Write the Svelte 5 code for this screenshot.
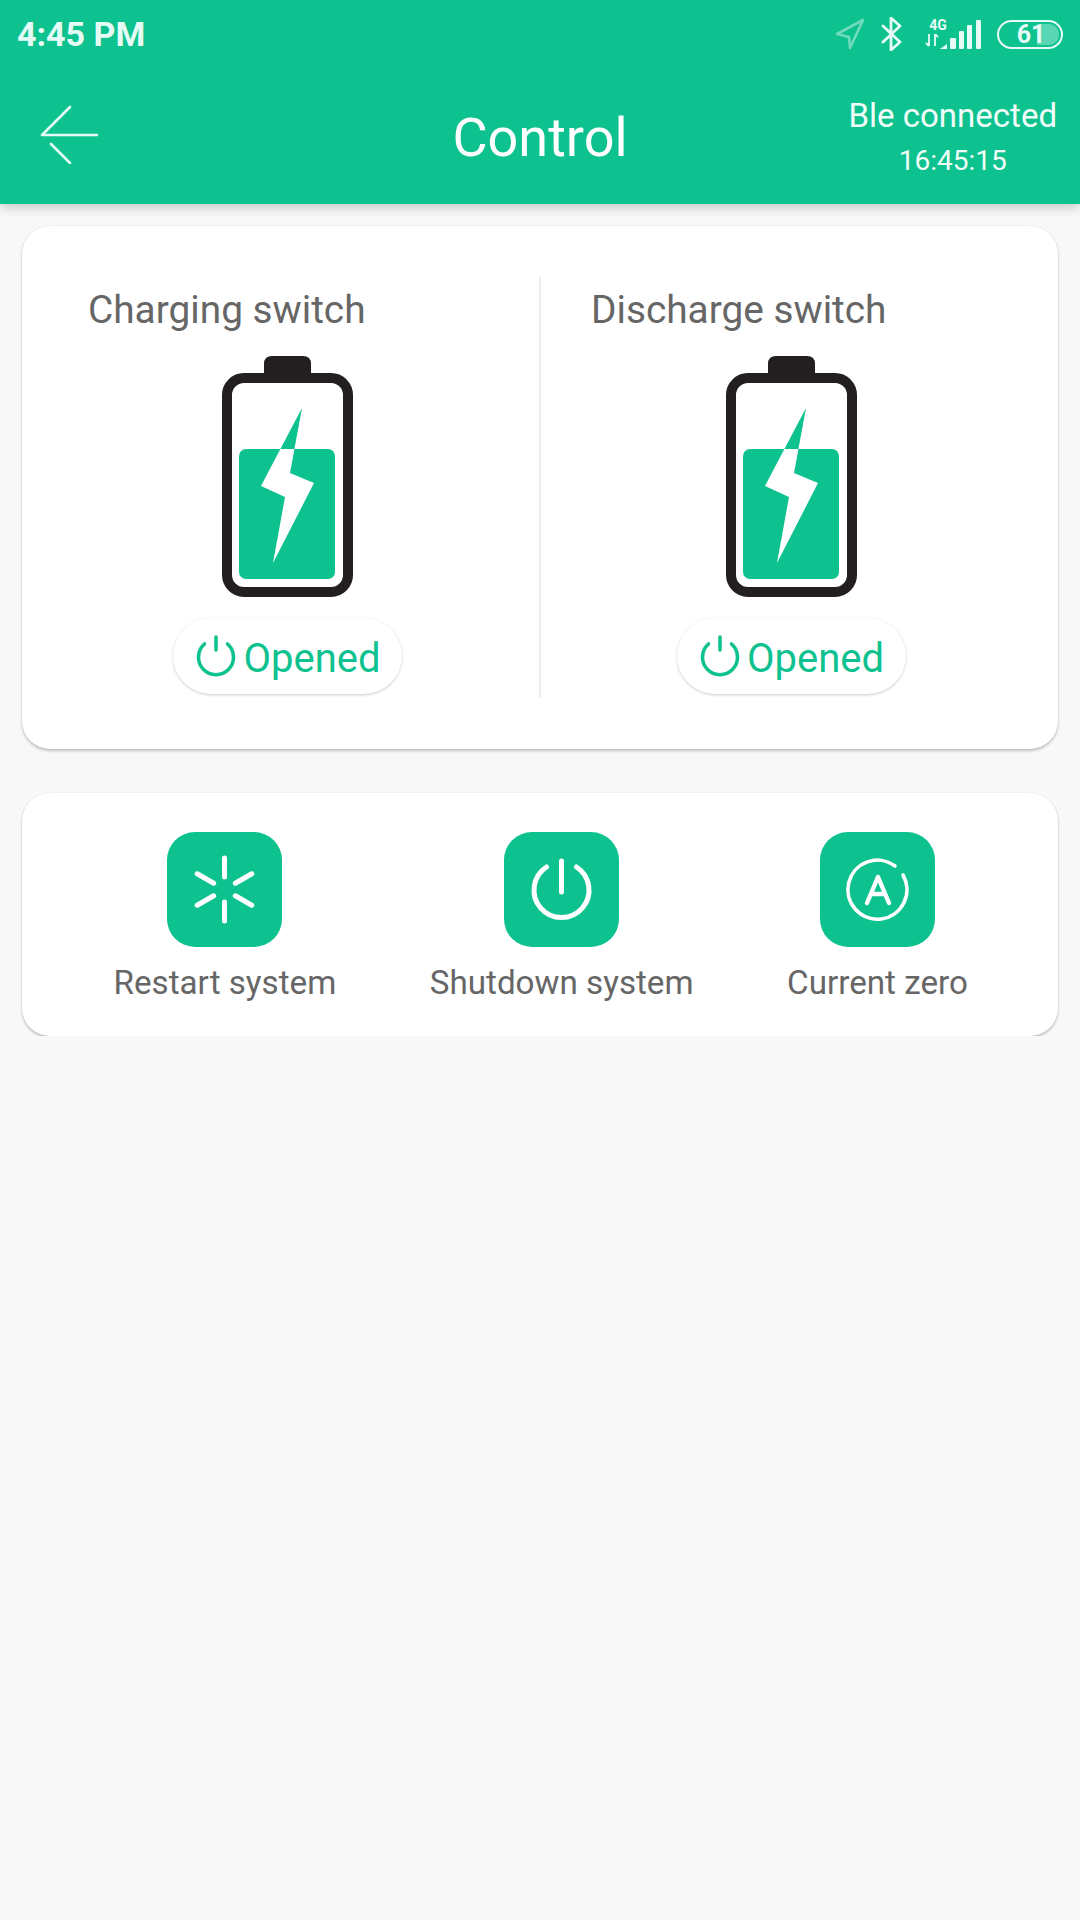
<script>
  const switches = [
    { title: 'Charging switch', state: 'Opened' },
    { title: 'Discharge switch', state: 'Opened' }
  ]
  const actions = [
    { key: 'restart', label: 'Restart system' },
    { key: 'shutdown', label: 'Shutdown system' },
    { key: 'zero', label: 'Current zero' }
  ]
  const spokes = [0, 60, 120, 180, 240, 300]
</script>

<header>
  <div class="status">
    <span class="clock">4:45 PM</span>
    <div class="status-icons">
      <svg class="i-nav" width="30" height="32" viewBox="0 0 30 32">
        <path d="M28 2 L2 16 L14 19 L15 30 Z" fill="none" stroke="#e6fbf5" stroke-opacity=".45" stroke-width="2.6" stroke-linejoin="round" />
      </svg>
      <svg class="i-bt" width="22" height="34" viewBox="0 0 22 34">
        <path d="M2 9 L19 25 L10 33 L10 1 L19 9 L2 25" fill="none" stroke="#e6fbf5" stroke-width="2.8" stroke-linejoin="round" stroke-linecap="round" />
      </svg>
      <div class="net">
        <span class="net-label">4G</span>
        <svg width="14" height="13" viewBox="0 0 14 13">
          <path d="M4 0 V12 M1 9 L4 12 M10 12 V0 M10 0 L13 3" fill="none" stroke="#e6fbf5" stroke-width="1.8" />
        </svg>
      </div>
      <svg class="i-signal" width="41" height="30" viewBox="0 0 41 30">
        <path d="M0 29 L7 24 V29 Z" fill="#e6fbf5" />
        <rect x="10" y="18" width="6" height="11" rx="1" fill="#e6fbf5" />
        <rect x="19" y="11" width="5" height="18" rx="1" fill="#e6fbf5" />
        <rect x="27" y="5" width="5" height="24" rx="1" fill="#e6fbf5" />
        <rect x="36" y="0" width="5" height="29" rx="1" fill="#e6fbf5" />
      </svg>
      <div class="level">
        <span class="level-fill"></span>
        <span class="level-num">61</span>
      </div>
    </div>
  </div>
  <div class="toolbar">
    <div class="back">
      <svg width="60" height="60" viewBox="0 0 60 60">
        <path d="M30 3 L2 31 H57 M11 40 L30 59" fill="none" stroke="#e6fbf5" stroke-width="2.6" stroke-linecap="round" stroke-linejoin="round" />
      </svg>
    </div>
    <h1>Control</h1>
    <div class="conn">
      <span class="conn-state">Ble connected</span>
      <span class="conn-time">16:45:15</span>
    </div>
  </div>
</header>

<main>
  <section class="card switches">
    {#each switches as sw}
      <div class="switch">
        <div class="switch-title">{sw.title}</div>
        <svg class="battery" width="131" height="241" viewBox="0 0 131 241">
          <path d="M42 18 V8 Q42 0 50 0 H81 Q89 0 89 8 V18 Z" fill="#231f20" />
          <rect x="5" y="22" width="121" height="214" rx="17" fill="#fff" stroke="#231f20" stroke-width="10" />
          <polygon points="80,52 58.4,93 72.4,93" fill="#0ec28f" />
          <rect x="17" y="93" width="96" height="130" rx="7" fill="#0ec28f" />
          <polygon points="58.4,93 39,130 63,141 51,207 92,127 68,117 72.4,93" fill="#fff" />
        </svg>
        <div class="pill">
          <svg width="40" height="42" viewBox="0 0 40 42">
            <path d="M8.5 9 A17.5 17.5 0 1 0 31.5 9 M20 2 V15" fill="none" stroke="#0ec28f" stroke-width="3.6" stroke-linecap="round" />
          </svg>
          <span class="pill-text">{sw.state}</span>
        </div>
      </div>
    {/each}
  </section>

  <section class="card actions">
    {#each actions as action}
      <div class="action">
        <div class="tile">
          <svg width="115" height="115" viewBox="0 0 115 115">
            <g fill="none" stroke="#fff" stroke-linecap="round">
              {#if action.key === 'restart'}
                {#each spokes as a}
                  <path d="M57.5 26 V45" stroke-width="5" transform="rotate({a} 57.5 57.5)" />
                {/each}
              {:else if action.key === 'shutdown'}
                <path d="M42.5 35 A27.5 27.5 0 1 0 72.5 35 M57.5 29 V60" stroke-width="5" />
              {:else}
                <path d="M83 43 A29.5 29.5 0 1 1 75 34" stroke-width="3.6" />
                <path d="M47 71 L58 45 L69 71 M51 62 H65" stroke-width="4.4" stroke-linejoin="round" />
              {/if}
            </g>
          </svg>
        </div>
        <span class="action-label">{action.label}</span>
      </div>
    {/each}
  </section>
</main>

<style>
  :global(body) {
    background: #f8f8f8;
    font-family: Roboto, "Liberation Sans", sans-serif;
  }

  header {
    background: #0ec28f;
    height: 204px;
    box-shadow: 0 4px 10px rgba(0, 0, 0, .18);
    color: #fff;
  }

  .status {
    height: 68px;
    display: flex;
    align-items: center;
    justify-content: space-between;
    padding: 0 17px;
  }
  .clock {
    font-size: 34px;
    font-weight: 700;
    color: #e6fbf5;
  }
  .status-icons {
    display: flex;
    align-items: center;
    gap: 14px;
  }
  .i-nav {
    margin-right: 2px;
  }
  .net {
    display: flex;
    flex-direction: column;
    align-items: center;
    gap: 3px;
    margin-left: 8px;
    margin-right: -25px;
    margin-top: -2px;
    width: 26px;
  }
  .net svg {
    margin-left: -12px;
  }
  .net-label {
    font-size: 14px;
    line-height: 12px;
    font-weight: 700;
    color: #e6fbf5;
  }
  .i-signal {
    margin-top: 2px;
    margin-right: 2px;
  }
  .level {
    position: relative;
    width: 66px;
    height: 29px;
    box-sizing: border-box;
    border: 2.6px solid #e6fbf5;
    border-radius: 15px;
    display: flex;
    align-items: center;
    justify-content: center;
  }
  .level-fill {
    position: absolute;
    right: 2px;
    top: 2px;
    bottom: 2px;
    width: 22px;
    border-radius: 0 10px 10px 0;
    background: rgba(230, 251, 245, .35);
  }
  .level-num {
    position: relative;
    font-size: 25px;
    font-weight: 700;
    color: #e6fbf5;
    margin-right: -2px;
  }

  .toolbar {
    height: 136px;
    display: grid;
    grid-template-columns: 1fr auto 1fr;
    align-items: center;
    padding: 0 23px;
  }
  .back {
    display: flex;
    margin-left: 17px;
    margin-bottom: 4px;
  }
  h1 {
    margin: 2px 0 0;
    font-size: 54px;
    font-weight: 400;
    color: #fff;
  }
  .conn {
    justify-self: end;
    display: flex;
    flex-direction: column;
    align-items: center;
    gap: 9px;
    color: #f0fdf9;
  }
  .conn-state {
    font-size: 33px;
  }
  .conn-time {
    font-size: 28px;
  }

  main {
    padding: 22px 22px 0;
    display: flex;
    flex-direction: column;
    gap: 44px;
  }
  .card {
    background: #fff;
    border-radius: 28px;
    box-shadow: 0 2px 3px rgba(0, 0, 0, .22), 0 0 2px rgba(0, 0, 0, .08);
  }

  .switches {
    height: 523px;
    box-sizing: border-box;
    padding: 50px 17px 51px 14px;
    display: grid;
    grid-template-columns: 503px 1fr;
  }
  .switch {
    display: flex;
    flex-direction: column;
    align-items: center;
  }
  .switch + .switch {
    border-left: 2px solid #eeeeee;
  }
  .switch-title {
    align-self: flex-start;
    padding-left: 52px;
    margin-top: 12px;
    font-size: 38.8px;
    line-height: 44px;
    color: #666;
  }
  .switch + .switch .switch-title {
    padding-left: 50px;
  }
  .battery {
    margin-top: 24px;
  }
  .pill {
    margin-top: 21px;
    width: 229px;
    height: 76px;
    box-sizing: border-box;
    padding-left: 2px;
    border-radius: 38px;
    background: #fff;
    box-shadow: 0 1px 3px rgba(0, 0, 0, .2);
    display: flex;
    align-items: center;
    justify-content: center;
    gap: 7px;
    font-size: 40px;
    color: #0ec28f;
  }
  .pill-text {
    margin-top: 5px;
  }

  .actions {
    height: 243px;
    display: flex;
    gap: 93.5px;
    padding: 39px 0 0 91.5px;
    box-sizing: border-box;
  }
  .action {
    display: flex;
    flex-direction: column;
    align-items: center;
    gap: 17px;
  }
  .tile {
    width: 115px;
    height: 115px;
    border-radius: 28px;
    background: #0ec28f;
  }
  .action-label {
    font-size: 33.2px;
    line-height: 38px;
    color: #666;
  }
</style>
